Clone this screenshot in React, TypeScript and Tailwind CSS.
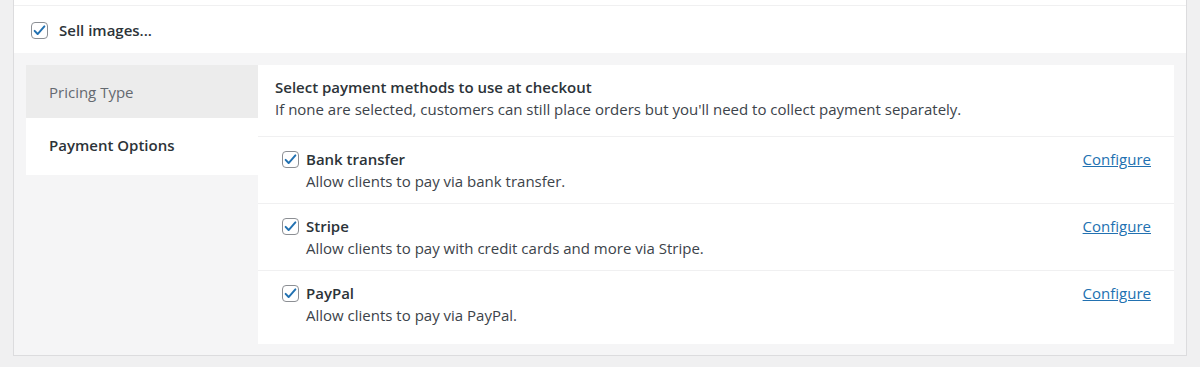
import React from "react";

const methods = [
  { id: "bank", title: "Bank transfer", description: "Allow clients to pay via bank transfer." },
  { id: "stripe", title: "Stripe", description: "Allow clients to pay with credit cards and more via Stripe." },
  { id: "paypal", title: "PayPal", description: "Allow clients to pay via PayPal." },
];

const CheckBox = () => (
  <span className="flex h-[17px] w-[17px] shrink-0 items-center justify-center rounded-[4px] border border-[#8c8f94] bg-white">
    <svg viewBox="0 0 20 20" className="h-[15px] w-[15px]">
      <path d="M3.5 10.5l4 4.2 9-10.2" fill="none" stroke="#2271b1" strokeWidth="2.6" strokeLinecap="round" strokeLinejoin="round" />
    </svg>
  </span>
);

const App = () => {
  return (
    <div className="h-[367px] overflow-hidden bg-[#f0f0f1] px-[13px] text-[15px] text-[#1d2327]" style={{ fontFamily: '"Open Sans", Arial, sans-serif' }}>
      <div className="border-x border-b border-[#dcdcde] bg-white">
        <div className="h-[6px] border-b border-[#f0f0f1]" />
        <div className="flex h-[47px] items-center gap-[11px] px-[17px] pt-[2px]">
          <CheckBox />
          <span className="font-semibold text-[#2c3338]">Sell images...</span>
        </div>
        <div className="flex bg-[#f5f5f6] px-[12px] pb-[11px] pt-[12px]">
          <ul className="w-[232px] shrink-0 self-start">
            <li className="flex h-[53px] items-center bg-[#ececec] px-[23px] pt-[1px] text-[#646970]">Pricing Type</li>
            <li className="flex h-[57px] items-center bg-white px-[23px] pb-[2px] font-semibold text-[#2c3338]">Payment Options</li>
          </ul>
          <div className="flex-1 bg-white">
            <div className="h-[72px] border-b border-[#f0f0f1] px-[17px] pt-[11px] leading-[22px]">
              <div className="font-semibold text-[#2c3338]">Select payment methods to use at checkout</div>
              <div className="text-[#3c434a]">If none are selected, customers can still place orders but you'll need to collect payment separately.</div>
            </div>
            {methods.map((m, i) => (
              <div key={m.id} className={`flex items-start justify-between pl-[24px] pr-[23px] pt-[11px] ${i < methods.length - 1 ? "h-[67px] border-b border-[#f0f0f1]" : "h-[73px]"}`}>
                <div className="flex gap-[7px]">
                  <div className="pt-[3px]">
                    <CheckBox />
                  </div>
                  <div className="leading-[22px]">
                    <div className="font-semibold text-[#2c3338]">{m.title}</div>
                    <div className="text-[#3c434a]">{m.description}</div>
                  </div>
                </div>
                <a href="#" className="leading-[22px] text-[#2271b1] underline">Configure</a>
              </div>
            ))}
          </div>
        </div>
      </div>
    </div>
  );
};

export default App;
